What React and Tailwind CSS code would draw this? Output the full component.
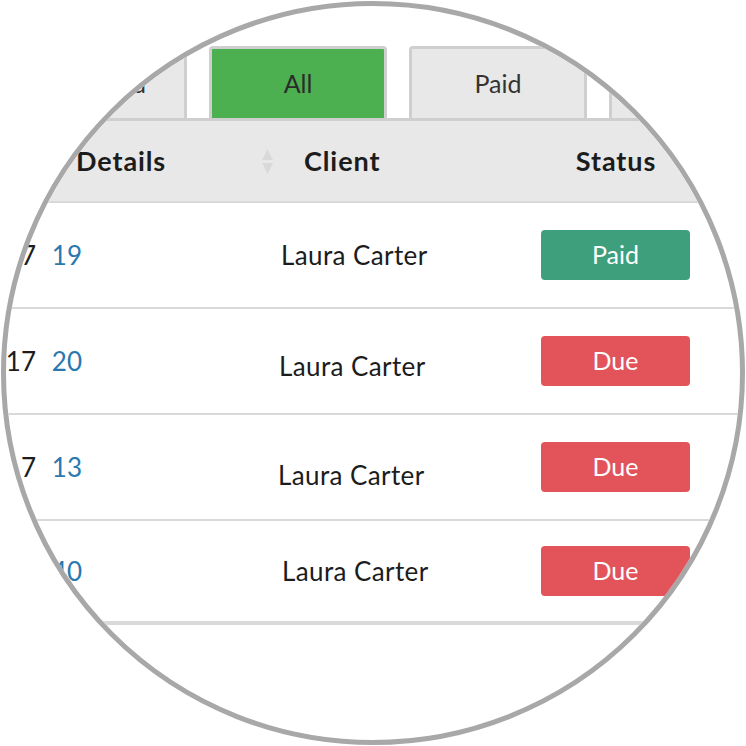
import React from "react";

const rows = [
  { date: "12/01/2017", num: "19", status: "Paid", pl: "pl-[199px]", mt: "mt-[1px]", h: "h-[106px]", b: "border-b-2" },
  { date: "14/01/2017", num: "20", status: "Due", pl: "pl-[197px]", mt: "mt-[11px]", h: "h-[106px]", b: "border-b-2" },
  { date: "21/01/2017", num: "13", status: "Due", pl: "pl-[196px]", mt: "mt-[17px]", h: "h-[106px]", b: "border-b-2" },
  { date: "25/01/2017", num: "40", status: "Due", pl: "pl-[200px]", mt: "mt-[0px]", h: "h-[104px]", b: "border-b-4" },
];

function SortIcon() {
  return (
    <svg width="11" height="25" viewBox="0 0 11 25" className="shrink-0">
      <polygon points="5.5,0 11,11 0,11" fill="#d9d9d9" />
      <polygon points="0,14 11,14 5.5,25" fill="#d9d9d9" />
    </svg>
  );
}

export default function App() {
  return (
    <div className="w-[746px] h-[746px] bg-white p-[1px] font-['Lato',sans-serif]">
      <div className="w-[744px] h-[744px] rounded-full border-[5px] border-[#a8a8a8] overflow-hidden bg-white">
        <div className="w-[900px] pt-[40px] -ml-[1px]">
          {/* Tabs */}
          <div className="flex items-end gap-[22px] pl-[4px]">
            <div className="w-[178px] h-[72px] border-[3px] border-b-0 border-[#cfcfcf] rounded-t-[4px] bg-[#e8e8e8] flex items-center justify-end pr-[38px] text-[25px] text-[#333]">
              Unpaid
            </div>
            <div className="w-[178px] h-[72px] border-[3px] border-b-0 border-[#cfcfcf] rounded-t-[4px] bg-[#4caf50] flex items-center justify-center text-[25px] text-[#2b2b2b]">
              All
            </div>
            <div className="w-[178px] h-[72px] border-[3px] border-b-0 border-[#cfcfcf] rounded-t-[4px] bg-[#e8e8e8] flex items-center justify-center text-[25px] text-[#333]">
              Paid
            </div>
            <div className="w-[178px] h-[72px] border-[3px] border-b-0 border-[#cfcfcf] rounded-t-[4px] bg-[#e8e8e8] flex items-center justify-center text-[25px] text-[#333]">
              Due
            </div>
          </div>
          {/* Header */}
          <div className="border-t-[3px] border-b-2 border-t-[#cfcfcf] border-b-[#d9d9d9] bg-[#e8e8e8] h-[85px] flex items-center text-[27px] font-bold tracking-[0.9px] text-[#1c1c1c]">
            <div className="w-[257px] pl-[71px] whitespace-nowrap">Details</div>
            <SortIcon />
            <div className="w-[31px]" />
            <div className="w-[232px]">Client</div>
            <div className="w-[160px] text-center">Status</div>
          </div>
          {/* Rows */}
          {rows.map((r, i) => (
            <div key={i} className={`flex items-center ${r.h} ${r.b} border-[#d9d9d9] text-[26px] text-[#1c1c1c]`}>
              <div className="w-[31px] flex justify-end whitespace-nowrap">{r.date}</div>
              <div className="w-[46px] flex justify-end text-[#2a78ae]">{r.num}</div>
              <div className={`w-[459px] ${r.pl}`}>
                <div className={`whitespace-nowrap tracking-[0.4px] ${r.mt}`}>Laura Carter</div>
              </div>
              <div
                className={`w-[149px] h-[50px] rounded-[4px] flex items-center justify-center text-white text-[25px] ${
                  r.status === "Paid" ? "bg-[#3d9f7b]" : "bg-[#e2535a]"
                }`}
              >
                {r.status}
              </div>
            </div>
          ))}
        </div>
      </div>
    </div>
  );
}
